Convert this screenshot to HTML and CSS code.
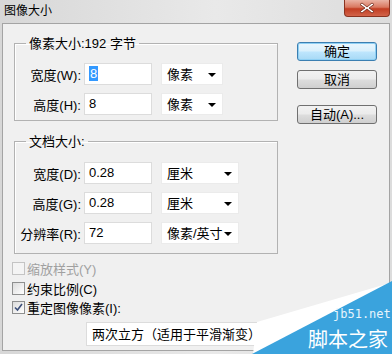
FILE: index.html
```html
<!DOCTYPE html>
<html lang="zh-CN">
<head>
    <meta charset="UTF-8">
    <title>图像大小</title>
    <link rel="stylesheet" href="styles.css">
</head>
<body>

<div class="window">
    <div class="titlebar">
        <span class="title">图像大小</span>
        <span class="close">
            <svg width="16" height="12" viewBox="0 0 16 12">
                <path d="M3 1 L8 5 L13 1 L15 2.5 L10 6 L15 9.5 L13 11 L8 7 L3 11 L1 9.5 L6 6 L1 2.5 Z" fill="#fff" stroke="#6b2416" stroke-width="0.8"/>
            </svg>
        </span>
    </div>

    <div class="client">
        <div class="main">
            <fieldset class="group pixels">
                <legend>像素大小:192 字节</legend>
                <div class="row">
                    <label>宽度(W):</label>
                    <span class="field"><span class="selected">8</span></span>
                    <span class="select">像素<i class="arrow"></i></span>
                </div>
                <div class="row">
                    <label>高度(H):</label>
                    <span class="field">8</span>
                    <span class="select">像素<i class="arrow"></i></span>
                </div>
            </fieldset>

            <fieldset class="group doc">
                <legend>文档大小:</legend>
                <div class="row">
                    <label>宽度(D):</label>
                    <span class="field">0.28</span>
                    <span class="select wide">厘米<i class="arrow"></i></span>
                </div>
                <div class="row">
                    <label>高度(G):</label>
                    <span class="field">0.28</span>
                    <span class="select wide">厘米<i class="arrow"></i></span>
                </div>
                <div class="row">
                    <label>分辨率(R):</label>
                    <span class="field">72</span>
                    <span class="select wide">像素/英寸<i class="arrow"></i></span>
                </div>
            </fieldset>

            <div class="checks">
                <div class="check disabled"><span class="box"></span>缩放样式(Y)</div>
                <div class="check"><span class="box"></span>约束比例(C)</div>
                <div class="check">
                    <span class="box">
                        <svg width="11" height="11" viewBox="0 0 11 11">
                            <path d="M2 5.5 L4.5 8 L9 2" fill="none" stroke="#3c4f7a" stroke-width="1.6"/>
                        </svg>
                    </span>重定图像像素(I):
                </div>
            </div>

            <div class="method">两次立方（适用于平滑渐变）<i class="arrow"></i></div>
        </div>

        <div class="buttons">
            <button class="btn default">确定</button>
            <button class="btn">取消</button>
            <button class="btn auto">自动(A)...</button>
        </div>
    </div>

    <!-- watermark in the corner -->
    <div class="watermark">
        <svg width="140" height="76" viewBox="0 0 140 76">
            <polygon points="5,44 138,5 1,76" fill="#ffffff"/>
            <polygon points="0,76 140,3 140,76" fill="#3aa3dd"/>
            <text x="81" y="40" class="wm-url">jb51.net</text>
            <text x="56" y="69" class="wm-name">脚本之家</text>
        </svg>
    </div>
</div>

</body>
</html>
```

FILE: styles.css
```css
body {
    margin: 0;
    font-family: "Liberation Sans", "Noto Sans CJK SC", sans-serif;
    font-size: 13px;
    color: #000;
    background: #e2e2e2;
}
.window {
    position: relative;
    width: 392px;
    height: 354px;
    display: flex;
    flex-direction: column;
    background: linear-gradient(90deg, #d7d7d7, #e9e9e9 55%, #dcdcdc);
    overflow: hidden;
}
.titlebar {
    height: 23px;
    display: flex;
    justify-content: space-between;
    align-items: flex-start;
}
.title {
    padding: 4px 0 0 4px;
    font-size: 12px;
    line-height: 14px;
}
.close {
    width: 46px;
    height: 17px;
    margin-right: 2px;
    box-sizing: border-box;
    display: flex;
    align-items: center;
    justify-content: center;
    background: linear-gradient(#eab3a4, #d97860 45%, #c23d22 55%, #d2644a);
    border: 1px solid #8a3320;
    border-top: 0;
    border-radius: 0 0 4px 4px;
}
.client {
    flex: 1;
    margin: 0 2px 3px;
    border: 1px solid #a4a4a4;
    background: #f0f0f0;
    display: flex;
    padding-left: 11px;
}
.main {
    width: 264px;
    padding-top: 12px;
}
.group {
    margin: 0;
    width: 264px;
    box-sizing: border-box;
    border: 1px solid #b2b2b2;
    box-shadow: inset 1px 1px 0 #fff;
}
.group legend {
    margin-left: 11px;
    padding: 0 3px;
    line-height: 15px;
}
.pixels {
    padding: 12px 0 5px;
}
.doc {
    margin-top: 13px;
    padding: 13px 0 9px;
}
.row {
    display: flex;
    align-items: center;
    height: 22px;
}
.row + .row {
    margin-top: 8px;
}
.row label {
    width: 66px;
    margin-right: 3px;
    text-align: right;
}
.field {
    width: 68px;
    height: 22px;
    box-sizing: border-box;
    border: 1px solid #dcdcdc;
    background: #fff;
    padding-left: 4px;
    line-height: 20px;
}
.selected {
    background: #3399ff;
    color: #fff;
    padding: 0 1px;
}
.select {
    position: relative;
    width: 62px;
    height: 22px;
    margin-left: 9px;
    box-sizing: border-box;
    background: #fff;
    border: 1px solid #ebebeb;
    padding-left: 5px;
    line-height: 21px;
}
.select.wide {
    width: 78px;
}
.arrow {
    position: absolute;
    right: 6px;
    top: 9px;
    border-left: 4px solid transparent;
    border-right: 4px solid transparent;
    border-top: 4px solid #000;
}
.checks {
    margin: 5px 0 0 -2px;
}
.check {
    display: flex;
    align-items: center;
    height: 19.5px;
}
.check.disabled {
    color: #a0a0a0;
}
.box {
    width: 13px;
    height: 13px;
    box-sizing: border-box;
    margin-right: 2px;
    border: 1px solid #8e8f8f;
    background: linear-gradient(135deg, #dcdcdc, #fff);
    display: flex;
    align-items: center;
    justify-content: center;
}
.disabled .box {
    border-color: #c4c4c4;
    background: #f4f4f4;
}
.method {
    position: relative;
    margin: 4px 0 0 72px;
    width: 196px;
    height: 24px;
    box-sizing: border-box;
    background: #fff;
    border: 1px solid #dcdcdc;
    padding-left: 5px;
    line-height: 22px;
    font-family: "Noto Sans CJK SC", sans-serif;
}
.method .arrow {
    top: 10px;
}
.buttons {
    display: flex;
    flex-direction: column;
    margin-left: 19px;
    padding-top: 18px;
}
.btn {
    width: 80px;
    height: 19px;
    padding: 0;
    font-family: inherit;
    font-size: 13px;
    line-height: 17px;
    color: #000;
    border: 1px solid #707070;
    border-radius: 3px;
    background: linear-gradient(#f2f2f2, #ebebeb 48%, #dddddd 52%, #cfcfcf);
}
.btn + .btn {
    margin-top: 9px;
}
.btn.auto {
    margin-top: 16px;
}
.btn.default {
    border-color: #3c7fb1;
    background: linear-gradient(#eaf6fd, #d9f0fc 48%, #bee6fd 52%, #a7d9f5);
    box-shadow: inset 0 0 0 1px #8fd0f4;
}
.watermark {
    position: absolute;
    right: 0;
    bottom: 0;
    width: 140px;
    height: 76px;
}
.watermark svg {
    display: block;
}
.wm-url {
    font-family: "DejaVu Sans Mono", monospace;
    font-size: 12px;
    fill: #e6f4fc;
}
.wm-name {
    font-family: "Noto Sans CJK SC", sans-serif;
    font-size: 20px;
    fill: #ffffff;
}
```
